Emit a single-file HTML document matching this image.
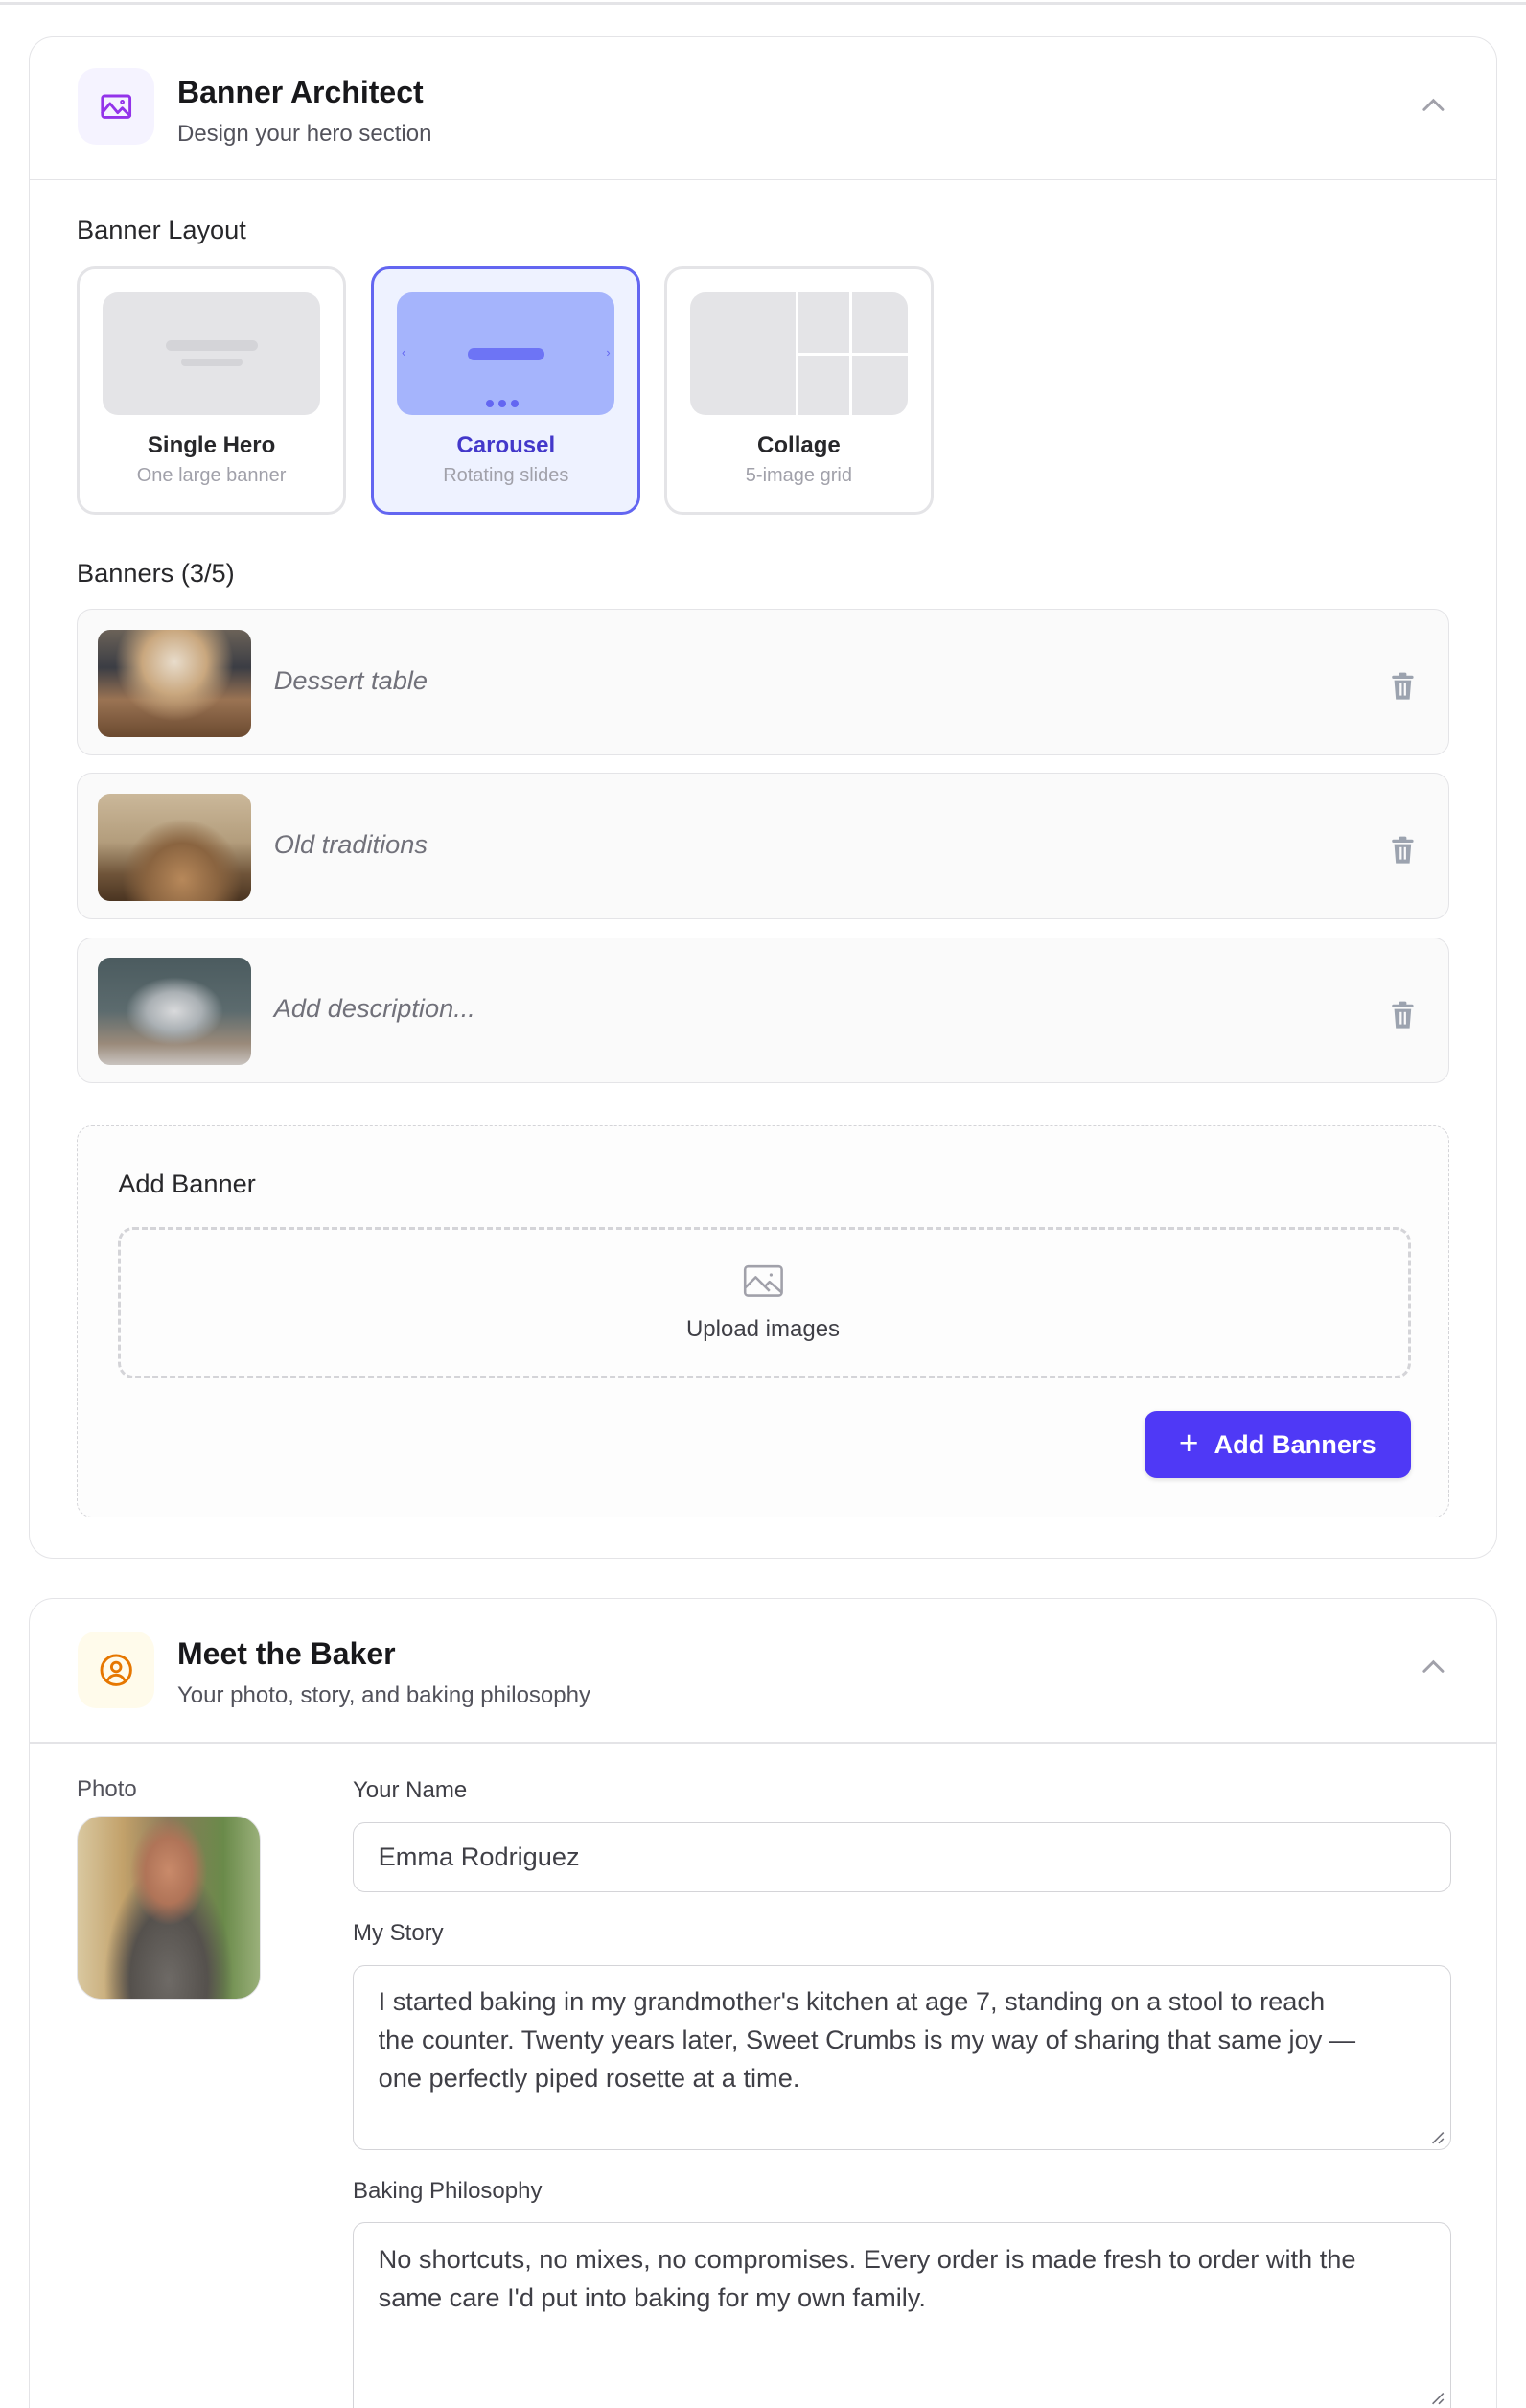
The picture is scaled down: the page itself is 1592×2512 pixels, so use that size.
<!DOCTYPE html>
<html><head><meta charset="utf-8"><style>
html{zoom:1.6;overflow:hidden}
body{margin:0;width:995px;height:1570px;background:#fff;font-family:"Liberation Sans",sans-serif;color:#18181b;overflow:hidden}
#w{position:relative;width:995px;height:1570px;overflow:hidden}
.a{position:absolute}
.card{position:absolute;left:19px;width:956px;border:1px solid #e4e4e7;border-radius:16px;background:#fff}
.ic{position:absolute;left:31px;width:50px;height:50px;border-radius:12px;display:flex;align-items:center;justify-content:center}
.t{position:absolute;left:96px;font-size:20px;font-weight:bold;color:#18181b}
.st{position:absolute;left:96px;font-size:15px;color:#52525b}
.lbl{position:absolute;font-size:17px;color:#27272a}
.lay{position:absolute;top:174px;width:172px;height:158px;border:2px solid #e4e4e7;border-radius:12px;background:#fff;text-align:center}
.pv{position:absolute;left:15px;top:15px;width:142px;height:80px;border-radius:10px;background:#e4e4e7;overflow:hidden}
.lt{position:absolute;left:0;right:0;top:106px;font-size:15px;font-weight:bold;color:#27272a}
.ls{position:absolute;left:0;right:0;top:127px;font-size:12.5px;color:#a1a1aa}
.row{position:absolute;left:50px;width:894px;height:94px;border:1px solid #e4e4e7;border-radius:10px;background:#fafafa}
.th{position:absolute;left:13px;top:13px;width:100px;height:70px;border-radius:8px}
.rt{position:absolute;left:128px;top:36px;font-size:17px;font-style:italic;color:#71717a}
.tr{position:absolute;left:855px;top:40px}
.inp{position:absolute;left:230px;width:716px;border:1px solid #d4d4d8;border-radius:8px;background:#fff;font-size:17px;color:#3f3f46;box-sizing:border-box;padding:0 16px;line-height:25px;white-space:nowrap}
.grip{position:absolute;right:3px;bottom:3px}
</style></head><body><div id="w">
<div class="a" style="left:0;top:1px;width:995px;height:2px;background:#e4e4e7"></div>

<div class="card" style="top:24px;height:991px">
 <div class="ic" style="top:20px;background:#f5f3ff"><svg width="24" height="24" viewBox="0 0 24 24" fill="none" stroke="#9333ea" stroke-width="1.8" stroke-linecap="round" stroke-linejoin="round"><rect x="3" y="5" width="18" height="14" rx="1.5"/><path d="M3 16l5-6 5 6 3-3 5 5"/><circle cx="16" cy="9" r="0.6"/></svg></div>
 <div class="t" style="top:24px">Banner Architect</div>
 <div class="st" style="top:54px">Design your hero section</div>
 <svg class="a" style="left:906px;top:38px" width="18" height="12" viewBox="0 0 18 12" fill="none" stroke="#a1a1aa" stroke-width="1.8" stroke-linecap="round"><path d="M3 9l6-6 6 6"/></svg>
 <div class="a" style="left:0;top:92px;width:956px;height:1px;background:#e4e4e7"></div>
</div>

<div class="lbl" style="left:50px;top:140px">Banner Layout</div>
<div class="lay" style="left:50px"><div class="pv"><div class="a" style="left:41px;top:31px;width:60px;height:7px;border-radius:4px;background:#d4d4d8"></div><div class="a" style="left:51px;top:43px;width:40px;height:5px;border-radius:3px;background:#d4d4d8"></div></div><div class="lt">Single Hero</div><div class="ls">One large banner</div></div>
<div class="lay" style="left:242px;border-color:#6366f1;background:#eef2ff"><div class="pv" style="background:#a5b4fc"><div class="a" style="left:46px;top:36px;width:50px;height:8px;border-radius:4px;background:#6d74f5"></div><div class="a" style="left:3px;top:34px;font-size:8px;color:#6366f1">‹</div><div class="a" style="right:3px;top:34px;font-size:8px;color:#6366f1">›</div><div class="a" style="left:58px;top:70px;width:5px;height:5px;border-radius:3px;background:#6366f1"></div><div class="a" style="left:66px;top:70px;width:5px;height:5px;border-radius:3px;background:#6366f1"></div><div class="a" style="left:74px;top:70px;width:5px;height:5px;border-radius:3px;background:#6366f1"></div></div><div class="lt" style="color:#4338ca">Carousel</div><div class="ls">Rotating slides</div></div>
<div class="lay" style="left:433px"><div class="pv" style="background:#fff"><div class="a" style="left:0;top:0;width:69px;height:80px;background:#e4e4e7"></div><div class="a" style="left:71px;top:0;width:33px;height:39px;background:#e4e4e7"></div><div class="a" style="left:106px;top:0;width:36px;height:39px;background:#e4e4e7"></div><div class="a" style="left:71px;top:41px;width:33px;height:39px;background:#e4e4e7"></div><div class="a" style="left:106px;top:41px;width:36px;height:39px;background:#e4e4e7"></div></div><div class="lt">Collage</div><div class="ls">5-image grid</div></div>

<div class="lbl" style="left:50px;top:364px">Banners (3/5)</div>
<div class="row" style="top:397px"><div class="th" style="background:radial-gradient(circle at 50% 30%,#e8dccb 0,#c9a77e 30%,transparent 55%),linear-gradient(180deg,#6b6258 0,#3b3d44 35%,#9a7353 65%,#6b4a30 100%)"></div><div class="rt">Dessert table</div><svg class="tr" width="18" height="20" viewBox="0 0 18 20" fill="#9ca3af"><rect x="2" y="3" width="14" height="2" rx="1"/><rect x="6.5" y="1" width="5" height="2.5" rx="1"/><path d="M3.5 6h11l-1 12.5H4.5z"/><rect x="7" y="8" width="1.4" height="8" fill="#fafafa"/><rect x="9.8" y="8" width="1.4" height="8" fill="#fafafa"/></svg></div>
<div class="row" style="top:504px"><div class="th" style="background:radial-gradient(ellipse at 55% 80%,#b7885a 0,#8a6440 30%,transparent 50%),linear-gradient(180deg,#cbb89a 0,#b39d7c 45%,#6f5439 75%,#4a3421 100%)"></div><div class="rt">Old traditions</div><svg class="tr" width="18" height="20" viewBox="0 0 18 20" fill="#9ca3af"><rect x="2" y="3" width="14" height="2" rx="1"/><rect x="6.5" y="1" width="5" height="2.5" rx="1"/><path d="M3.5 6h11l-1 12.5H4.5z"/><rect x="7" y="8" width="1.4" height="8" fill="#fafafa"/><rect x="9.8" y="8" width="1.4" height="8" fill="#fafafa"/></svg></div>
<div class="row" style="top:611px"><div class="th" style="background:radial-gradient(ellipse at 50% 50%,#d9dadc 0,#aab0b4 25%,transparent 45%),linear-gradient(180deg,#4b5b5f 0,#5c6b6e 50%,#9a8a7a 80%,#c9c4c0 100%)"></div><div class="rt">Add description...</div><svg class="tr" width="18" height="20" viewBox="0 0 18 20" fill="#9ca3af"><rect x="2" y="3" width="14" height="2" rx="1"/><rect x="6.5" y="1" width="5" height="2.5" rx="1"/><path d="M3.5 6h11l-1 12.5H4.5z"/><rect x="7" y="8" width="1.4" height="8" fill="#fafafa"/><rect x="9.8" y="8" width="1.4" height="8" fill="#fafafa"/></svg></div>

<div class="a" style="left:50px;top:734px;width:894px;height:254px;border:1px dashed #d4d4d8;border-radius:10px;background:#fdfdfd"></div>
<div class="lbl" style="left:77px;top:762px">Add Banner</div>
<div class="a" style="left:77px;top:800px;width:839px;height:95px;border:2px dashed #d4d4d8;border-radius:10px;background:#fdfdfd"></div>
<svg class="a" style="left:484px;top:824px" width="28" height="24" viewBox="0 0 28 24" fill="none" stroke="#a1a1aa" stroke-width="1.6" stroke-linejoin="round"><rect x="2" y="2" width="24" height="19" rx="2"/><path d="M2 16l7-7 9 9M15 15l3-3 8 7"/><circle cx="19" cy="7.5" r="1" fill="#a1a1aa" stroke="none"/></svg>
<div class="a" style="left:0;width:995px;top:858px;text-align:center;font-size:15px;color:#3f3f46">Upload images</div>
<div class="a" style="left:746px;top:920px;width:174px;height:44px;border-radius:8px;background:#4f39f6;color:#fff;font-size:17px;font-weight:bold;display:flex;align-items:center;justify-content:center;box-shadow:0 1px 3px rgba(0,0,0,.12)"><span style="font-weight:normal;font-size:22px;margin-right:10px;margin-top:-2px">+</span>Add Banners</div>

<div class="card" style="top:1042px;height:600px">
 <div class="ic" style="top:21px;background:#fffbeb"><svg width="24" height="24" viewBox="0 0 24 24" fill="none" stroke="#e67700" stroke-width="1.8" stroke-linecap="round"><circle cx="12" cy="12" r="9.5"/><circle cx="12" cy="10" r="3"/><path d="M6.5 18.5c1.5-2.5 3.3-3.3 5.5-3.3s4 .8 5.5 3.3"/></svg></div>
 <div class="t" style="top:24px">Meet the Baker</div>
 <div class="st" style="top:54px">Your photo, story, and baking philosophy</div>
 <svg class="a" style="left:906px;top:38px" width="18" height="12" viewBox="0 0 18 12" fill="none" stroke="#a1a1aa" stroke-width="1.8" stroke-linecap="round"><path d="M3 9l6-6 6 6"/></svg>
 <div class="a" style="left:0;top:93px;width:956px;height:1px;background:#e4e4e7"></div>
</div>

<div class="a" style="left:50px;top:1158px;font-size:15px;color:#52525b">Photo</div>
<div class="a" style="left:50px;top:1184px;width:120px;height:120px;border-radius:16px;border:1px solid #e4e4e7;box-sizing:border-box;background:radial-gradient(ellipse at 50% 30%,#c98a6a 0,#b07458 18%,transparent 30%),radial-gradient(ellipse at 50% 90%,#6e6a66 0,#55514d 30%,transparent 50%),linear-gradient(90deg,#d9c8a0 0,#c2a16a 25%,#8a7a5a 50%,#6a8a4a 80%,#9ab07a 100%)"></div>

<div class="a" style="left:230px;top:1159px;font-size:15px;color:#3f3f46">Your Name</div>
<div class="inp" style="top:1188px;height:46px;line-height:44px">Emma Rodriguez</div>
<div class="a" style="left:230px;top:1252px;font-size:15px;color:#3f3f46">My Story</div>
<div class="inp" style="top:1281px;height:121px;padding-top:11px">I started baking in my grandmother's kitchen at age 7, standing on a stool to reach<br>the counter. Twenty years later, Sweet Crumbs is my way of sharing that same joy —<br>one perfectly piped rosette at a time.<svg class="grip" width="9" height="9" viewBox="0 0 9 9" stroke="#71717a" stroke-width="1"><path d="M1 8L8 1M5 8L8 5"/></svg></div>
<div class="a" style="left:230px;top:1420px;font-size:15px;color:#3f3f46">Baking Philosophy</div>
<div class="inp" style="top:1449px;height:130px;padding-top:11px">No shortcuts, no mixes, no compromises. Every order is made fresh to order with the<br>same care I'd put into baking for my own family.<svg class="a" style="right:3px;top:110px" width="9" height="9" viewBox="0 0 9 9" stroke="#71717a" stroke-width="1"><path d="M1 8L8 1M5 8L8 5"/></svg></div>
</div></body></html>
